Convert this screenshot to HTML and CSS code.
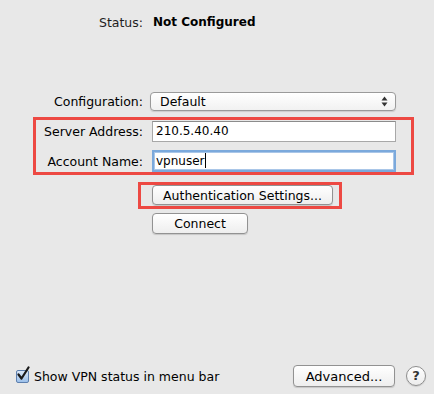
FILE: index.html
```html
<!DOCTYPE html>
<html lang="en">
<head>
  <meta charset="UTF-8" />
  <title>VPN</title>
  <link rel="stylesheet" href="styles.css">
</head>
<body>
  <div class="pane">
    <div class="row status">
      <span class="label">Status:</span>
      <span class="value">Not Configured</span>
    </div>

    <div class="row config">
      <span class="label">Configuration:</span>
      <div class="popup">
        <span>Default</span>
        <svg class="arrows" width="7" height="11" viewBox="0 0 7 11">
          <path d="M3.5 0.5 L6.5 4.5 L0.5 4.5 Z" fill="#333"/>
          <path d="M3.5 10.5 L6.5 6.5 L0.5 6.5 Z" fill="#333"/>
        </svg>
      </div>
    </div>

    <div class="group">
      <div class="row">
        <span class="label">Server Address:</span>
        <div class="field">210.5.40.40</div>
      </div>
      <div class="row account">
        <span class="label">Account Name:</span>
        <div class="field focused">vpnuser<span class="caret"></span></div>
      </div>
    </div>

    <div class="auth-box">
      <button class="btn auth">Authentication Settings...</button>
    </div>
    <button class="btn connect">Connect</button>

    <div class="footer">
      <label class="check">
        <span class="box">
          <svg width="16" height="17" viewBox="0 0 16 17">
            <path d="M3.5 8.5 L6.5 12.5 L13.5 1.5" fill="none" stroke="#1a1a1a" stroke-width="2.2" stroke-linecap="round" stroke-linejoin="round"/>
          </svg>
        </span>
        Show VPN status in menu bar
      </label>
      <button class="btn advanced">Advanced...</button>
      <button class="help">?</button>
    </div>
  </div>
</body>
</html>
```

FILE: styles.css
```css
html, body {
  margin: 0;
  padding: 0;
  background-color: #e8e8e8;
  color: #000000;
  font-family: 'DejaVu Sans', sans-serif;
  font-size: 12.5px;
}
.pane {
  height: 394px;
  display: flex;
  flex-direction: column;
  box-sizing: border-box;
  padding-bottom: 7px;
}
.row {
  display: flex;
  align-items: center;
}
.label {
  width: 143px;
  text-align: right;
  flex-shrink: 0;
}
.status {
  margin-top: 14px;
  height: 16px;
}
.status .label {
  color: #1e1e1e;
}
.status .value {
  margin-left: 10px;
  font-weight: bold;
  font-size: 12px;
}
.config {
  margin-top: 62px;
}
.popup {
  margin-left: 7px;
  width: 246px;
  height: 19px;
  box-sizing: border-box;
  border: 1px solid #9a9a9a;
  border-radius: 4px;
  background: linear-gradient(#ffffff, #f1f1f1);
  box-shadow: 0 1px 1px rgba(0, 0, 0, 0.12);
  display: flex;
  align-items: center;
  justify-content: space-between;
  padding: 0 7px 0 9px;
}
.group {
  margin: 6px 0 0 33px;
  width: 381px;
  box-sizing: border-box;
  border: 3px solid #ed4943;
  padding: 1px 0 0 0;
}
.group .label {
  width: 107px;
}
.field {
  margin-left: 9px;
  width: 244px;
  height: 21px;
  box-sizing: border-box;
  background: #ffffff;
  border: 1px solid #a8a8a8;
  border-top-color: #8c8c8c;
  padding: 0 3px;
  font-size: 12px;
  line-height: 19px;
}
.account {
  margin-top: 8px;
}
.field.focused {
  height: 22px;
  border: 2px solid #7ba9dc;
  box-shadow: inset 0 0 0 1px #a9c6e8;
  padding: 0 2px;
  line-height: 18px;
}
.caret {
  display: inline-block;
  width: 1px;
  height: 15px;
  background: #000;
  vertical-align: -3px;
}
.btn {
  font-family: 'DejaVu Sans', sans-serif;
  font-size: 12.5px;
  color: #000;
  background: linear-gradient(#ffffff, #eeeeee);
  border: 1px solid #929292;
  border-radius: 4px;
  box-shadow: 0 1px 1px rgba(0, 0, 0, 0.15);
  padding: 0;
  box-sizing: border-box;
}
.auth-box {
  margin: 7px 0 0 138px;
  width: 204px;
  height: 27px;
  box-sizing: border-box;
  border: 3px solid #ed4943;
  padding: 0 0 0 11px;
}
.auth {
  width: 181px;
  height: 20px;
}
.connect {
  margin: 4px 0 0 152px;
  width: 96px;
  height: 21px;
}
.footer {
  margin-top: auto;
  display: flex;
  align-items: center;
  height: 22px;
}
.check {
  display: flex;
  align-items: center;
  margin-left: 16px;
  font-size: 12.5px;
  flex: 1;
}
.box {
  position: relative;
  width: 13px;
  height: 13px;
  box-sizing: border-box;
  border: 1px solid #5d7fae;
  border-radius: 2px;
  background: linear-gradient(#dbe8f8, #9cc0ea);
  margin-right: 5px;
}
.box svg {
  position: absolute;
  left: -2px;
  top: -5px;
}
.advanced {
  width: 102px;
  height: 22px;
  font-size: 13px;
}
.help {
  margin: 0 8px 0 11px;
  width: 20px;
  height: 20px;
  border-radius: 50%;
  border: 1px solid #8e8e8e;
  background: linear-gradient(#ffffff, #ececec);
  box-shadow: 0 1px 1px rgba(0, 0, 0, 0.12);
  font-family: 'DejaVu Sans', sans-serif;
  font-weight: bold;
  font-size: 13px;
  color: #333;
  padding: 0;
  line-height: 18px;
}
```
